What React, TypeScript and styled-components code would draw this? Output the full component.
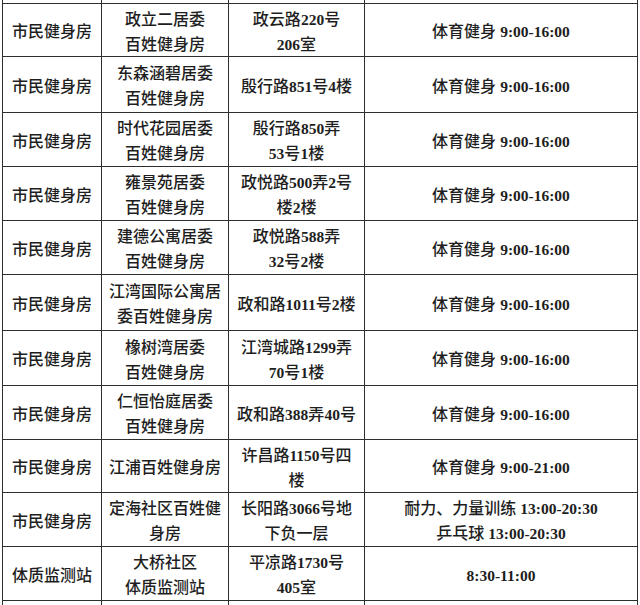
import React from 'react';
import styled, { createGlobalStyle } from 'styled-components';

const GlobalStyle = createGlobalStyle`
  html, body {
    margin: 0;
    padding: 0;
    background: #ffffff;
  }
  body {
    font-family: "Liberation Serif", "Noto Sans CJK SC", serif;
    color: #1e1e1e;
  }
`;

const Page = styled.div`
  width: 640px;
  height: 605px;
  overflow: hidden;
  background: #ffffff;
`;

const Grid = styled.div`
  margin-left: 2px;
  width: 636px;
  display: grid;
  grid-template-columns: 98px 126px 135px 1fr;
  grid-template-rows: 3px 52px 55px 53px 53px 53px 55px 54px 53px 52px 53px 53px 20px;
  gap: 1px;
  padding: 0 1px;
  background: #2e2e2e;
  box-sizing: border-box;
`;

const Cell = styled.div`
  background: #ffffff;
  display: flex;
  flex-direction: column;
  align-items: center;
  justify-content: center;
  text-align: center;
  font-size: 16px;
  font-weight: 500;
  line-height: 25px;
  padding-top: 3px;
  box-sizing: border-box;
  white-space: nowrap;
  overflow: hidden;
`;

const Num = styled.span`
  font-family: "Liberation Serif", serif;
  font-weight: bold;
  font-size: 15.5px;
`;

const Line = styled.div`
  display: block;
`;

// latin runs go bold serif, the rest stays in the CJK face
const Text: React.FC<{ value: string }> = ({ value }) => {
  const parts = value.split(/([0-9:\-]+)/).filter(Boolean);
  return (
    <Line>
      {parts.map((p, i) => (/[0-9]/.test(p) ? <Num key={i}>{p}</Num> : <span key={i}>{p}</span>))}
    </Line>
  );
};

const Lines: React.FC<{ lines: string[] }> = ({ lines }) => (
  <Cell>
    {lines.map((l, i) => (
      <Text key={i} value={l} />
    ))}
  </Cell>
);

type Row = {
  kind: string;
  name: string[];
  addr: string[];
  hours: string[];
};

const gym = '市民健身房';
const sport = ['体育健身 9:00-16:00'];

const rows: Row[] = [
  { kind: gym, name: ['政立二居委', '百姓健身房'], addr: ['政云路220号', '206室'], hours: sport },
  { kind: gym, name: ['东森涵碧居委', '百姓健身房'], addr: ['殷行路851号4楼'], hours: sport },
  { kind: gym, name: ['时代花园居委', '百姓健身房'], addr: ['殷行路850弄', '53号1楼'], hours: sport },
  { kind: gym, name: ['雍景苑居委', '百姓健身房'], addr: ['政悦路500弄2号', '楼2楼'], hours: sport },
  { kind: gym, name: ['建德公寓居委', '百姓健身房'], addr: ['政悦路588弄', '32号2楼'], hours: sport },
  { kind: gym, name: ['江湾国际公寓居', '委百姓健身房'], addr: ['政和路1011号2楼'], hours: sport },
  { kind: gym, name: ['橡树湾居委', '百姓健身房'], addr: ['江湾城路1299弄', '70号1楼'], hours: sport },
  { kind: gym, name: ['仁恒怡庭居委', '百姓健身房'], addr: ['政和路388弄40号'], hours: sport },
  { kind: gym, name: ['江浦百姓健身房'], addr: ['许昌路1150号四', '楼'], hours: ['体育健身 9:00-21:00'] },
  {
    kind: gym,
    name: ['定海社区百姓健', '身房'],
    addr: ['长阳路3066号地', '下负一层'],
    hours: ['耐力、力量训练 13:00-20:30', '乒乓球 13:00-20:30'],
  },
  { kind: '体质监测站', name: ['大桥社区', '体质监测站'], addr: ['平凉路1730号', '405室'], hours: ['8:30-11:00'] },
];

const Spacer: React.FC = () => (
  <>
    <Cell />
    <Cell />
    <Cell />
    <Cell />
  </>
);

const App: React.FC = () => (
  <Page>
    <GlobalStyle />
    <Grid>
      <Spacer />
      {rows.map((r, i) => (
        <React.Fragment key={i}>
          <Lines lines={[r.kind]} />
          <Lines lines={r.name} />
          <Lines lines={r.addr} />
          <Lines lines={r.hours} />
        </React.Fragment>
      ))}
      <Spacer />
    </Grid>
  </Page>
);

export default App;
